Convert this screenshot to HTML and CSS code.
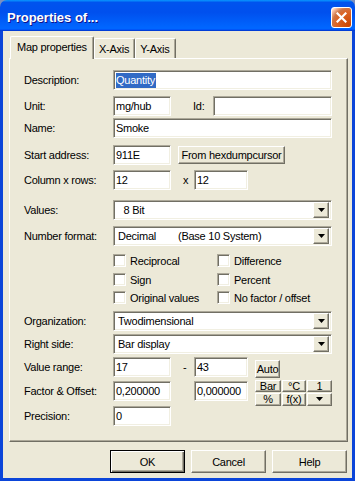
FILE: index.html
```html
<!DOCTYPE html>
<html lang="en">
  <head>
    <meta charset="UTF-8" />
    <title>Properties of...</title>
    <link rel="stylesheet" href="styles.css">
  </head>
  <body>
    <div class="window">
      <div class="titlebar">
        <span class="title">Properties of...</span>
        <span class="close">
          <svg width="11" height="11" viewBox="0 0 11 11">
            <path d="M1.5 1.5L9.5 9.5M9.5 1.5L1.5 9.5" stroke="#fff" stroke-width="2.2" stroke-linecap="square" />
          </svg>
        </span>
      </div>

      <div class="client">
        <div class="tabs">
          <div class="tab active">Map properties</div>
          <div class="tab">X-Axis</div>
          <div class="tab">Y-Axis</div>
        </div>

        <div class="panel">
          <div class="row mt12">
            <span class="label">Description:</span>
            <span class="field wide"><span class="selected">Quantity</span></span>
          </div>
          <div class="row mt6">
            <span class="label">Unit:</span>
            <span class="field short">mg/hub</span>
            <span class="id-label">Id:</span>
            <span class="field id"></span>
          </div>
          <div class="row mt2">
            <span class="label">Name:</span>
            <span class="field wide">Smoke</span>
          </div>
          <div class="row mt7">
            <span class="label">Start address:</span>
            <span class="field short">911E</span>
            <span class="raised small-btn hex">From hexdumpcursor</span>
          </div>
          <div class="row mt5">
            <span class="label">Column x rows:</span>
            <span class="field short">12</span>
            <span class="sep">x</span>
            <span class="field narrow">12</span>
          </div>

          <div class="row mt10">
            <span class="label">Values:</span>
            <span class="field wide combo">
              <span class="combo-text">&nbsp;&nbsp;8 Bit</span>
              <span class="raised drop"><svg width="7" height="4"><path d="M0 0h7L3.5 4z" /></svg></span>
            </span>
          </div>
          <div class="row mt6">
            <span class="label">Number format:</span>
            <span class="field wide combo">
              <span class="combo-text">Decimal<span class="base">(Base 10 System)</span></span>
              <span class="raised drop"><svg width="7" height="4"><path d="M0 0h7L3.5 4z" /></svg></span>
            </span>
          </div>

          <div class="row check-row mt8">
            <span class="check"><span class="box"></span>Reciprocal</span>
            <span class="check"><span class="box"></span>Difference</span>
          </div>
          <div class="row check-row mt6">
            <span class="check"><span class="box"></span>Sign</span>
            <span class="check"><span class="box"></span>Percent</span>
          </div>
          <div class="row check-row mt5">
            <span class="check"><span class="box"></span>Original values</span>
            <span class="check"><span class="box"></span>No factor / offset</span>
          </div>

          <div class="row mt7">
            <span class="label">Organization:</span>
            <span class="field wide combo">
              <span class="combo-text">Twodimensional</span>
              <span class="raised drop"><svg width="7" height="4"><path d="M0 0h7L3.5 4z" /></svg></span>
            </span>
          </div>
          <div class="row mt3">
            <span class="label">Right side:</span>
            <span class="field wide combo">
              <span class="combo-text">Bar display</span>
              <span class="raised drop"><svg width="7" height="4"><path d="M0 0h7L3.5 4z" /></svg></span>
            </span>
          </div>
          <div class="row mt3">
            <span class="label">Value range:</span>
            <span class="field short">17</span>
            <span class="sep">-</span>
            <span class="field narrow">43</span>
            <span class="raised small-btn auto">Auto</span>
          </div>
          <div class="row mt4">
            <span class="label">Factor &amp; Offset:</span>
            <span class="field short">0,200000</span>
            <span class="sep"></span>
            <span class="field narrow">0,000000</span>
            <div class="unit-grid">
              <span class="raised mini">Bar</span>
              <span class="raised mini">°C</span>
              <span class="raised mini">1</span>
              <span class="raised mini">%</span>
              <span class="raised mini">f(x)</span>
              <span class="raised mini"><svg width="7" height="4"><path d="M0 0h7L3.5 4z" /></svg></span>
            </div>
          </div>
          <div class="row mt5">
            <span class="label">Precision:</span>
            <span class="field short">0</span>
          </div>
        </div>

        <div class="footer">
          <span class="raised btn default">OK</span>
          <span class="raised btn">Cancel</span>
          <span class="raised btn">Help</span>
        </div>
      </div>
    </div>
  </body>
</html>
```

FILE: styles.css
```css
* {
  box-sizing: border-box;
}

body {
  margin: 0;
  background: #7b8fbf;
  font-family: "Liberation Sans", Arial, sans-serif;
  font-size: 11px;
  letter-spacing: -0.25px;
  color: #000;
}

.window {
  width: 355px;
  height: 481px;
  display: flex;
  flex-direction: column;
}

/* title bar */
.titlebar {
  height: 31px;
  flex: none;
  display: flex;
  align-items: center;
  justify-content: space-between;
  padding: 3px 3px 0 7px;
  border-radius: 7px 7px 0 0;
  background: linear-gradient(
    180deg,
    #0997ff,
    #0053ee 8%,
    #0050ee 40%,
    #0066ff 88%,
    #0066ff 93%,
    #005bff 95%,
    #003dd7 96%,
    #003dd7
  );
}

.title {
  color: #fff;
  font-size: 13px;
  font-weight: bold;
  letter-spacing: 0;
  text-shadow: 1px 1px 0 #0f1089;
}

.close {
  width: 21px;
  height: 21px;
  display: flex;
  align-items: center;
  justify-content: center;
  border: 1px solid #fff;
  border-radius: 3px;
  background: radial-gradient(
    circle at 90% 90%,
    #cc4600 0%,
    #dc6527 55%,
    #cd7546 70%,
    #ffccb2 90%,
    #fff 100%
  );
}

/* window body */
.client {
  flex: 1;
  display: flex;
  flex-direction: column;
  background: #ece9d8;
  border: 3px solid #0b45d9;
  border-top: 0;
  padding: 5px 4px 0 6px;
}

.raised {
  background: #ece9d8;
  border: 1px solid;
  border-color: #fff #716f64 #716f64 #fff;
  box-shadow: inset -1px -1px 0 #aca899;
}

/* tabs */
.tabs {
  height: 22px;
  flex: none;
  display: flex;
  align-items: flex-end;
  padding-left: 1px;
  position: relative;
  z-index: 1;
}

.tab {
  height: 20px;
  display: flex;
  align-items: center;
  padding: 0 5px 0 4px;
  background: #ece9d8;
  border-top: 1px solid #fff;
  border-left: 1px solid #fff;
  border-right: 1px solid #716f64;
  border-radius: 2px 2px 0 0;
  box-shadow: inset -1px 0 0 #aca899;
}

.tab.active {
  width: 84px;
  height: 23px;
  margin-bottom: -1px;
  padding-left: 6px;
  padding-bottom: 2px;
}

.panel {
  height: 384px;
  flex: none;
  border: 1px solid;
  border-color: #fff #716f64 #716f64 #fff;
  box-shadow: inset -1px -1px 0 #aca899;
  padding-left: 14px;
}

/* form rows */
.row {
  height: 20px;
  display: flex;
  align-items: center;
}

.mt2 { margin-top: 2px; }
.mt3 { margin-top: 3px; }
.mt4 { margin-top: 4px; }
.mt5 { margin-top: 5px; }
.mt6 { margin-top: 6px; }
.mt7 { margin-top: 7px; }
.mt8 { margin-top: 8px; }
.mt10 { margin-top: 10px; }
.mt12 { margin-top: 11px; }

.label {
  width: 89px;
  flex: none;
  white-space: nowrap;
}

.field {
  height: 20px;
  flex: none;
  display: flex;
  align-items: center;
  padding: 0 2px;
  background: #fff;
  border: 1px solid;
  border-color: #aca899 #fff #fff #aca899;
  box-shadow: inset 1px 1px 0 #716f64, inset -1px -1px 0 #f1efe2;
  white-space: nowrap;
}

.wide { width: 219px; }
.short { width: 58px; }
.narrow { width: 54px; }
.id { width: 119px; }

.selected {
  background: #316ac5;
  color: #fff;
  line-height: 15px;
  padding-right: 1px;
}

.id-label {
  width: 42px;
  padding-left: 22px;
}

.sep {
  width: 23px;
  padding-left: 12px;
}

.small-btn {
  height: 18px;
  display: flex;
  align-items: center;
  justify-content: center;
}

.hex {
  width: 107px;
  margin-left: 7px;
}

.auto {
  width: 25px;
  margin-left: 7px;
  margin-top: 4px;
}

/* combo boxes */
.combo {
  justify-content: space-between;
  padding-right: 2px;
}

.combo-text {
  padding-left: 2px;
}

.base {
  margin-left: 22px;
}

.drop {
  width: 16px;
  height: 16px;
  display: flex;
  align-items: center;
  justify-content: center;
}

/* check boxes */
.check-row {
  height: 13px;
  padding-left: 89px;
}

.check {
  width: 104px;
  display: flex;
  align-items: center;
  gap: 4px;
  white-space: nowrap;
}

.box {
  width: 13px;
  height: 13px;
  flex: none;
  background: #fff;
  border: 1px solid;
  border-color: #aca899 #fff #fff #aca899;
  box-shadow: inset 1px 1px 0 #716f64, inset -1px -1px 0 #f1efe2;
}

/* unit buttons */
.unit-grid {
  display: grid;
  grid-template-columns: 26px 24px 25px;
  grid-template-rows: 12px 13px;
  gap: 1px;
  margin-left: 7px;
  margin-top: 3px;
}

.mini {
  display: flex;
  align-items: center;
  justify-content: center;
  line-height: 10px;
  overflow: hidden;
}

/* dialog buttons */
.footer {
  flex: 1;
  display: flex;
  justify-content: flex-end;
  align-items: flex-start;
  gap: 6px;
  padding: 8px 1px 0 0;
}

.btn {
  width: 75px;
  height: 23px;
  display: flex;
  align-items: center;
  justify-content: center;
}

.btn.default {
  border-color: #000;
  box-shadow: inset 1px 1px 0 #fff, inset -1px -1px 0 #716f64,
    inset -2px -2px 0 #aca899;
}
```
